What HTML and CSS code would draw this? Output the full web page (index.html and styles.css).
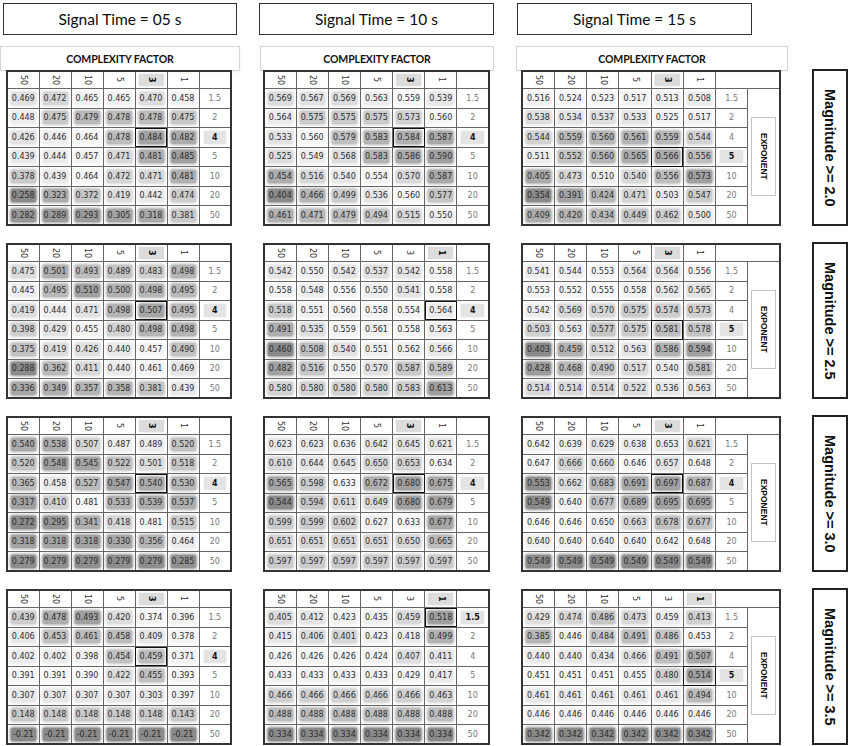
FILE: index.html
```html
<!DOCTYPE html>
<html lang="en">
<head>
<meta charset="utf-8">
<title>Signal time / magnitude heat maps</title>
<link rel="stylesheet" href="styles.css">
</head>
<body>
<main class="page">
  <div class="time c1">Signal Time = 05 s</div>
  <div class="time c2">Signal Time = 10 s</div>
  <div class="time c3">Signal Time = 15 s</div>
  <div></div>

  <div class="cf c1">COMPLEXITY FACTOR</div>
  <div class="cf c2">COMPLEXITY FACTOR</div>
  <div class="cf c3">COMPLEXITY FACTOR</div>
  <div></div>

  <table class="hm c1" data-t="0"></table>
  <table class="hm c2" data-t="1"></table>
  <table class="hm c3" data-t="2"></table>
  <div class="mag"><span>Magnitude &gt;= 2.0</span></div>

  <table class="hm c1" data-t="3"></table>
  <table class="hm c2" data-t="4"></table>
  <table class="hm c3" data-t="5"></table>
  <div class="mag"><span>Magnitude &gt;= 2.5</span></div>

  <table class="hm c1" data-t="6"></table>
  <table class="hm c2" data-t="7"></table>
  <table class="hm c3" data-t="8"></table>
  <div class="mag"><span>Magnitude &gt;= 3.0</span></div>

  <table class="hm c1" data-t="9"></table>
  <table class="hm c2" data-t="10"></table>
  <table class="hm c3" data-t="11"></table>
  <div class="mag"><span>Magnitude &gt;= 3.5</span></div>
</main>
<script src="script.js"></script>
</body>
</html>
```

FILE: styles.css
```css
* { box-sizing: border-box; }

body {
  margin: 0;
  background: #fff;
  color: #222;
  font-family: "DejaVu Sans", Verdana, sans-serif;
}

.page {
  display: grid;
  grid-template-columns: 259px 257px 296px 36px;
  grid-template-rows: 32px 36px 155px 173px 173px 173px;
  align-items: end;
  padding-top: 3px;
}

.time {
  height: 32px;
  width: 235px;
  border: 1.5px solid #333;
  display: flex;
  align-items: center;
  justify-content: center;
  font-family: Lato, "Open Sans", sans-serif;
  font-size: 15.5px;
  color: #0c0c0c;
}
.time.c1 { width: 234px; margin-left: 3px; }
.time.c3 { margin-left: 1px; }

.cf {
  height: 25px;
  border: 1px solid #d6d6d6;
  box-shadow: 0 1px 2px rgba(0, 0, 0, 0.06);
  display: flex;
  align-items: center;
  justify-content: center;
  font-family: Lato, "Open Sans", sans-serif;
  font-weight: 700;
  font-size: 10.5px;
  letter-spacing: -0.1px;
  color: #111;
}
.cf.c1 { width: 240px; }
.cf.c2 { width: 234px; margin-left: 1px; }
.cf.c3 { width: 272px; }

.hm {
  border-collapse: collapse;
  table-layout: fixed;
  border: 2px solid #333;
  height: 155px;
}
.hm.c1 { width: 226px; margin-left: 6px; }
.hm.c2 { width: 227px; margin-left: 4px; }
.hm.c3 { width: 260px; margin-left: 5px; }

.hm th,
.hm td {
  border: 1px solid #666;
  padding: 0;
  text-align: center;
  vertical-align: middle;
  font-size: 8px;
  font-weight: 400;
}
.hm thead tr { height: 18px; }
.hm tbody tr { height: 19.5px; }

.h {
  height: 12px;
  margin: 0 3px;
  display: flex;
  align-items: center;
  justify-content: center;
  color: #333;
}
.h.hl { background: #dcdcdc; box-shadow: 0 0 2px #dcdcdc; color: #111; font-weight: 700; }
.vt { writing-mode: vertical-rl; line-height: 1; font-size: 8px; }

.v {
  display: block;
  height: 13px;
  line-height: 13px;
  margin: 0 3px;
  border-radius: 2px;
  color: #2e2e2e;
  background: rgb(var(--g), var(--g), var(--g));
  box-shadow: 0 0 3px 1px rgb(var(--g), var(--g), var(--g));
}

td.best { outline: 1px solid #111; outline-offset: -1px; }

td.e { color: #777; }
.ev {
  display: block;
  height: 13px;
  line-height: 13px;
  margin: 0 4px;
}
.ev.hl { background: #e4e4e4; box-shadow: 0 0 2px #e4e4e4; color: #111; font-weight: 700; }

.exp {
  width: 25px;
  height: 79px;
  margin: 0 auto;
  border: 1px solid #c4c4c4;
  display: flex;
  align-items: center;
  justify-content: center;
}
.exp span {
  writing-mode: vertical-rl;
  font-family: "Liberation Sans", Arial, sans-serif;
  font-weight: 700;
  font-size: 8.5px;
  color: #111;
}

.mag {
  height: 157px;
  border: 2px solid #222;
  display: flex;
  align-items: center;
  justify-content: center;
}
.mag span {
  writing-mode: vertical-rl;
  font-family: "Liberation Sans", Arial, sans-serif;
  font-weight: 700;
  font-size: 14.5px;
  color: #111;
}
```

FILE: script.js
```js
const COLS = ['50', '20', '10', '5', '3', '1'];
const EXPS = ['1.5', '2', '4', '5', '10', '20', '50'];

const TABLES = [
  { c: 4, r: 2, rows: [
    '0.469 0.472 0.465 0.465 0.470 0.458',
    '0.448 0.475 0.479 0.478 0.478 0.475',
    '0.426 0.446 0.464 0.478 0.484 0.482',
    '0.439 0.444 0.457 0.471 0.481 0.485',
    '0.378 0.439 0.464 0.472 0.471 0.481',
    '0.258 0.323 0.372 0.419 0.442 0.474',
    '0.282 0.289 0.293 0.305 0.318 0.381'] },
  { c: 4, r: 2, rows: [
    '0.569 0.567 0.569 0.563 0.559 0.539',
    '0.564 0.575 0.575 0.575 0.573 0.560',
    '0.533 0.560 0.579 0.583 0.584 0.587',
    '0.525 0.549 0.568 0.583 0.586 0.590',
    '0.454 0.516 0.540 0.554 0.570 0.587',
    '0.404 0.466 0.499 0.536 0.560 0.577',
    '0.461 0.471 0.479 0.494 0.515 0.550'] },
  { c: 4, r: 3, rows: [
    '0.516 0.524 0.523 0.517 0.513 0.508',
    '0.538 0.534 0.537 0.533 0.525 0.517',
    '0.544 0.559 0.560 0.561 0.559 0.544',
    '0.511 0.552 0.560 0.565 0.566 0.556',
    '0.405 0.473 0.510 0.540 0.556 0.573',
    '0.354 0.391 0.424 0.471 0.503 0.547',
    '0.409 0.420 0.434 0.449 0.462 0.500'] },
  { c: 4, r: 2, rows: [
    '0.475 0.501 0.493 0.489 0.483 0.498',
    '0.445 0.495 0.510 0.500 0.498 0.495',
    '0.419 0.444 0.471 0.498 0.507 0.495',
    '0.398 0.429 0.455 0.480 0.498 0.498',
    '0.375 0.419 0.426 0.440 0.457 0.490',
    '0.288 0.362 0.411 0.440 0.461 0.469',
    '0.336 0.349 0.357 0.358 0.381 0.439'] },
  { c: 5, r: 2, rows: [
    '0.542 0.550 0.542 0.537 0.542 0.558',
    '0.558 0.548 0.556 0.550 0.541 0.558',
    '0.518 0.551 0.560 0.558 0.554 0.564',
    '0.491 0.535 0.559 0.561 0.558 0.563',
    '0.460 0.508 0.540 0.551 0.562 0.566',
    '0.482 0.516 0.550 0.570 0.587 0.589',
    '0.580 0.580 0.580 0.580 0.583 0.613'] },
  { c: 4, r: 3, rows: [
    '0.541 0.544 0.553 0.564 0.564 0.556',
    '0.553 0.552 0.555 0.558 0.562 0.565',
    '0.542 0.569 0.570 0.575 0.574 0.573',
    '0.503 0.563 0.577 0.575 0.581 0.578',
    '0.403 0.459 0.512 0.563 0.586 0.594',
    '0.428 0.468 0.490 0.517 0.540 0.581',
    '0.514 0.514 0.514 0.522 0.536 0.563'] },
  { c: 4, r: 2, rows: [
    '0.540 0.538 0.507 0.487 0.489 0.520',
    '0.520 0.548 0.545 0.522 0.501 0.518',
    '0.365 0.458 0.527 0.547 0.540 0.530',
    '0.317 0.410 0.481 0.533 0.539 0.537',
    '0.272 0.295 0.341 0.418 0.481 0.515',
    '0.318 0.318 0.318 0.330 0.356 0.464',
    '0.279 0.279 0.279 0.279 0.279 0.285'] },
  { c: 4, r: 2, rows: [
    '0.623 0.623 0.636 0.642 0.645 0.621',
    '0.610 0.644 0.645 0.650 0.653 0.634',
    '0.565 0.598 0.633 0.672 0.680 0.675',
    '0.544 0.594 0.611 0.649 0.680 0.679',
    '0.599 0.599 0.602 0.627 0.633 0.677',
    '0.651 0.651 0.651 0.651 0.650 0.665',
    '0.597 0.597 0.597 0.597 0.597 0.597'] },
  { c: 4, r: 2, rows: [
    '0.642 0.639 0.629 0.638 0.653 0.621',
    '0.647 0.666 0.660 0.646 0.657 0.648',
    '0.553 0.662 0.683 0.691 0.697 0.687',
    '0.549 0.640 0.677 0.689 0.695 0.695',
    '0.646 0.646 0.650 0.663 0.678 0.677',
    '0.640 0.640 0.640 0.640 0.642 0.648',
    '0.549 0.549 0.549 0.549 0.549 0.549'] },
  { c: 4, r: 2, rows: [
    '0.439 0.478 0.493 0.420 0.374 0.396',
    '0.406 0.453 0.461 0.458 0.409 0.378',
    '0.402 0.402 0.398 0.454 0.459 0.371',
    '0.391 0.391 0.390 0.422 0.455 0.393',
    '0.307 0.307 0.307 0.307 0.303 0.397',
    '0.148 0.148 0.148 0.148 0.148 0.143',
    '-0.21 -0.21 -0.21 -0.21 -0.21 -0.21'] },
  { c: 5, r: 0, rows: [
    '0.405 0.412 0.423 0.435 0.459 0.518',
    '0.415 0.406 0.401 0.423 0.418 0.499',
    '0.426 0.426 0.426 0.424 0.407 0.411',
    '0.433 0.433 0.433 0.433 0.429 0.417',
    '0.466 0.466 0.466 0.466 0.466 0.463',
    '0.488 0.488 0.488 0.488 0.488 0.488',
    '0.334 0.334 0.334 0.334 0.334 0.334'] },
  { c: 5, r: 3, rows: [
    '0.429 0.474 0.486 0.473 0.459 0.413',
    '0.385 0.446 0.484 0.491 0.486 0.453',
    '0.440 0.440 0.434 0.466 0.491 0.507',
    '0.451 0.451 0.451 0.455 0.480 0.514',
    '0.461 0.461 0.461 0.461 0.461 0.494',
    '0.446 0.446 0.446 0.446 0.446 0.446',
    '0.342 0.342 0.342 0.342 0.342 0.342'] }
];

function el(tag, cls, text) {
  const n = document.createElement(tag);
  if (cls) n.className = cls;
  if (text !== undefined) n.textContent = text;
  return n;
}

document.querySelectorAll('table.hm').forEach(function (tb) {
  const d = TABLES[+tb.dataset.t];
  const wide = tb.classList.contains('c3');
  const grid = d.rows.map(function (r) { return r.split(' '); });
  const nums = grid.flat().map(Number).sort(function (a, b) { return a - b; });
  const min = nums[0];
  const max = nums[nums.length - 1];
  const mid = (nums[20] + nums[21]) / 2;

  const thead = el('thead');
  const htr = el('tr');
  COLS.forEach(function (c, i) {
    const th = el('th');
    const box = el('div', 'h' + (i === d.c ? ' hl' : ''));
    box.appendChild(el('span', 'vt', c));
    th.appendChild(box);
    htr.appendChild(th);
  });
  const last = el('th');
  if (wide) last.colSpan = 2;
  htr.appendChild(last);
  thead.appendChild(htr);
  tb.appendChild(thead);

  const tbody = el('tbody');
  grid.forEach(function (row, r) {
    const tr = el('tr');
    row.forEach(function (s, c) {
      const v = Number(s);
      let g;
      if (v <= mid) {
        const t = mid === min ? 0 : (mid - v) / (mid - min);
        g = 246 - t * (246 - 138);
      } else {
        const t = max === mid ? 0 : (v - mid) / (max - mid);
        g = 246 - t * (246 - 160);
      }
      const td = el('td', (r === d.r && c === d.c) ? 'best' : '');
      const sp = el('span', 'v', s);
      sp.style.setProperty('--g', Math.round(g));
      td.appendChild(sp);
      tr.appendChild(td);
    });
    const te = el('td', 'e');
    te.appendChild(el('span', 'ev' + (r === d.r ? ' hl' : ''), EXPS[r]));
    tr.appendChild(te);
    if (wide && r === 0) {
      const tx = el('td', 'x');
      tx.rowSpan = 7;
      const box = el('div', 'exp');
      box.appendChild(el('span', '', 'EXPONENT'));
      tx.appendChild(box);
      tr.appendChild(tx);
    }
    tbody.appendChild(tr);
  });
  tb.appendChild(tbody);
});
```
